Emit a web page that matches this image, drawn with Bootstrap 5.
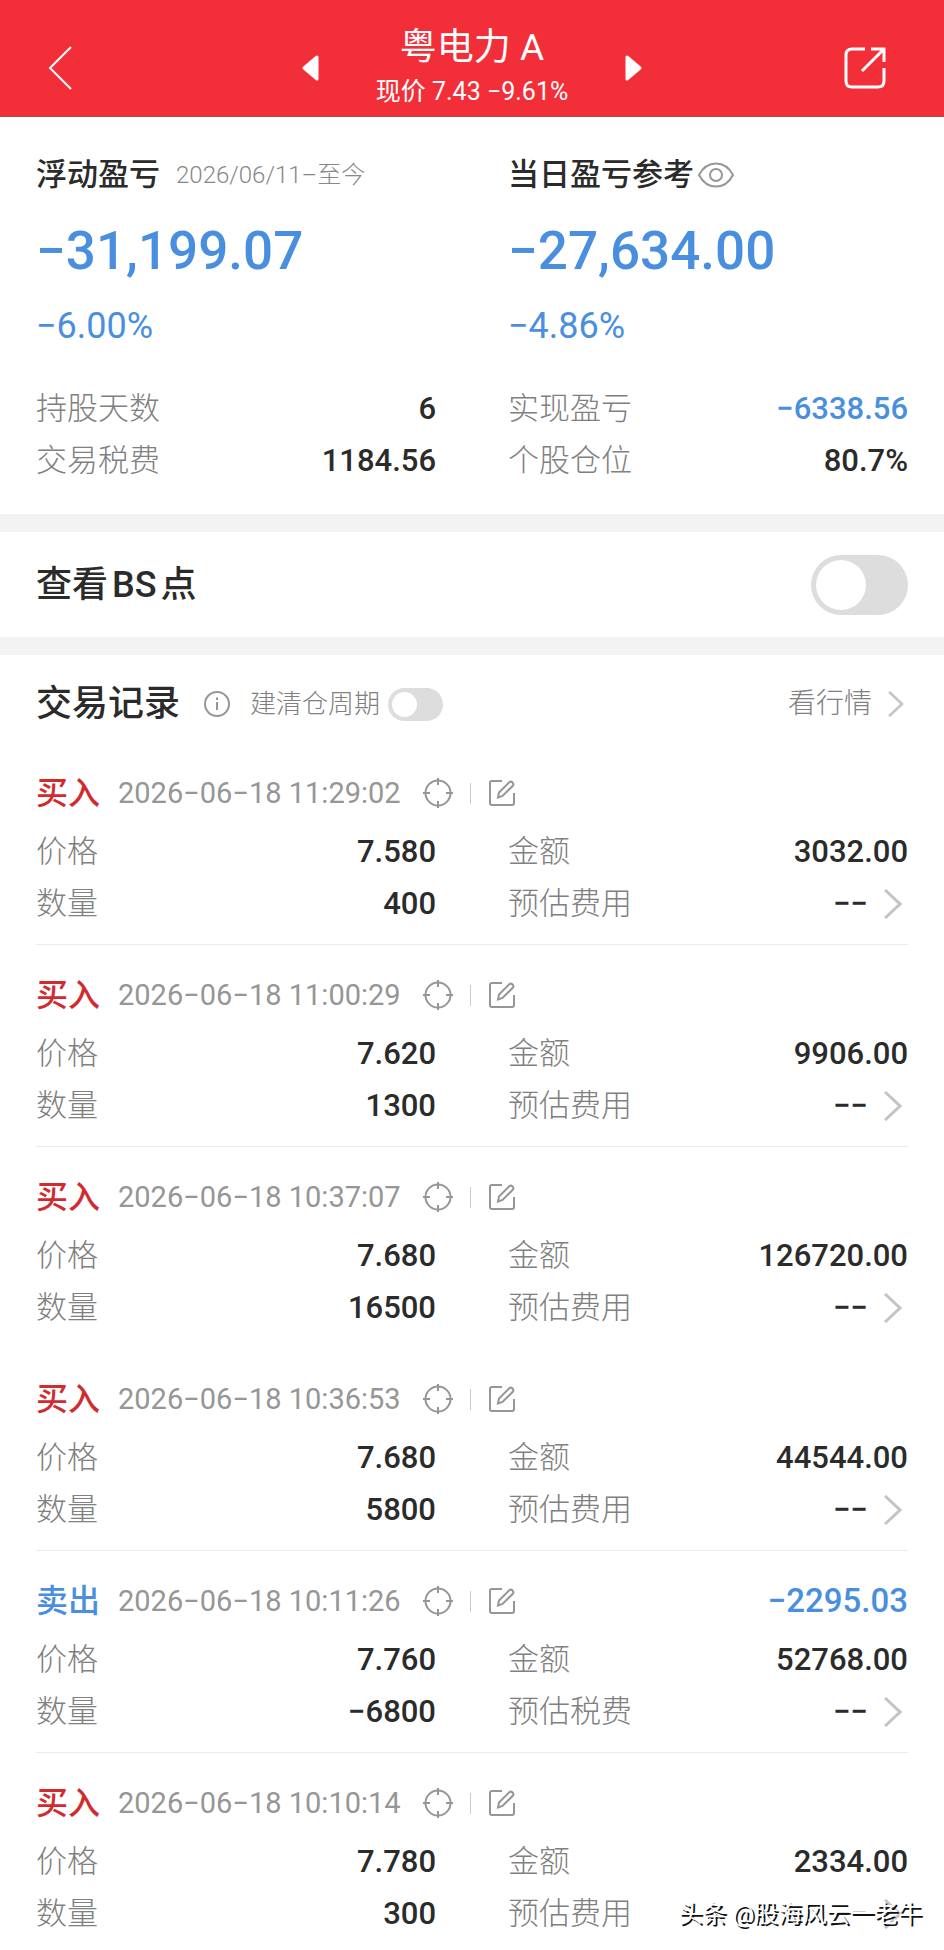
<!DOCTYPE html>
<html lang="zh-CN">
<head>
<meta charset="utf-8">
<meta name="viewport" content="width=device-width, initial-scale=1">
<title>粤电力 A</title>
<link href="https://cdn.jsdelivr.net/npm/bootstrap@5.3.0/dist/css/bootstrap.min.css" rel="stylesheet">
<style>
:root{--ink:#2b2b2b;--muted:#969696;--blue:#4a8fdf;--red:#d22b2f;--line:#ebebeb;--band:#f3f3f3}
body{font-family:Roboto,"Noto Sans CJK SC",sans-serif;font-size:31px;line-height:52px;color:var(--ink);background:#fff}
svg{display:block;flex:none;fill:none;stroke:currentColor}
button{background:none;border:0;padding:0;color:inherit;line-height:1}
a{color:inherit;text-decoration:none}
.topbar{display:grid;grid-template-columns:1fr auto 1fr;align-items:center;background:#f22f38;color:#fff;height:117px;padding:20px 36px 0;border-bottom:1px solid #b7474f}
.topbar h1{font-size:37px;line-height:48px;font-weight:400}
.quote{font-size:25px;line-height:40px}
.switcher{gap:56px}
.two{display:grid;grid-template-columns:1fr 1fr;column-gap:72px}
.edge{padding-left:36px;padding-right:36px}
.summary{padding-top:28px;padding-bottom:27px;border-bottom:18px solid var(--band)}
.heading{font-size:31px;line-height:60px;font-weight:500}
.period{font-size:24px;font-weight:300;color:#888;margin-left:16px}
.amount{font-size:53px;line-height:92px;font-weight:500}
.rate{font-size:36px;line-height:58px}
.blue{color:var(--blue)}
.muted{color:var(--muted)}
.val{font-weight:500}
.lbl{font-weight:300;color:#808080}
.stats{margin-top:28px}
.bs{height:123px;border-bottom:18px solid var(--band);font-size:36px;font-weight:500}
.switch{appearance:none;flex:none;margin:0;border-radius:30px;width:97px;height:60px;background:#ddd;padding:5px;cursor:pointer}
.switch::before{content:"";display:block;height:50px;width:50px;border-radius:50%;background:#fff}
.switch.mini{width:55px;height:33px;padding:4px}
.switch.mini::before{width:25px;height:25px}
.loghead{height:88px;padding-top:10px}
.loghead h2{font-size:36px;font-weight:500;line-height:52px}
.cycle{font-size:26px;font-weight:300;color:#808080;margin-left:20px}
.more{font-size:28px;font-weight:300;color:#808080}
.trade{padding:21px 0 14px;border-bottom:1px solid var(--line)}
.trade.plain{border-color:transparent}
.trade:last-child{padding-bottom:0;border:0}
.tradehead{height:58px;margin-bottom:4px}
.side{font-size:32px;font-weight:500;color:var(--red);margin-right:18px}
.side.sell{color:var(--blue)}
.stamp{font-size:29px;color:var(--muted);margin-right:22px}
.bar{width:1px;height:21px;background:#ccc;margin:0 17px}
.gain{font-size:33px;font-weight:500}
.chev{color:#c4c4c4}
.watermark{position:absolute;right:22px;bottom:8px;font-size:24px;line-height:36px;color:#fff;text-shadow:2px 2px 0 #111;white-space:nowrap}
</style>
</head>
<body>
<svg class="d-none" xmlns="http://www.w3.org/2000/svg">
<symbol id="aim" viewBox="0 0 30 30"><circle cx="15" cy="15" r="12.5"/><path d="M15 0v7M15 23v7M0 15h7M23 15h7"/></symbol>
<symbol id="edit" viewBox="0 0 28 28"><path d="M14 2H4Q2 2 2 4v20q0 2 2 2h20q2 0 2-2V14"/><path d="M10 18.500l1-5L21.500 3q1.500-1 3 .500t.500 3L14.500 17z"/></symbol>
<symbol id="next" viewBox="0 0 18 30"><path d="M1 1l15 14L1 29"/></symbol>
</svg>
<header class="topbar">
<button type="button" class="justify-self-start d-flex" aria-label="返回"><svg width="48" height="46" viewBox="0 0 48 46" stroke-width="2"><path d="M35 2L14 23l21 21"/></svg></button>
<div class="switcher d-flex align-items-center">
<button type="button" aria-label="上一只"><svg width="18" height="26" viewBox="0 0 18 26"><path d="M15 2v22L2 13z" fill="currentColor" stroke-width="3" stroke-linejoin="round"/></svg></button>
<div class="text-center"><h1 class="m-0">粤电力 A</h1><div class="quote">现价 7.43 −9.61%</div></div>
<button type="button" aria-label="下一只"><svg width="18" height="26" viewBox="0 0 18 26"><path d="M3 2v22l13-11z" fill="currentColor" stroke-width="3" stroke-linejoin="round"/></svg></button>
</div>
<button type="button" class="ms-auto" aria-label="分享"><svg width="64" height="42" viewBox="0 0 64 42" stroke-width="3"><path d="M21 2H8Q2 2 2 8v26q0 6 6 6h26q6 0 6-6V21M27 2h13v13M18 24L40 2"/></svg></button>
</header>
<main class="position-relative">
<section class="summary edge">
<div class="two">
<div>
<div class="d-flex align-items-center heading"><span>浮动盈亏</span><span class="period">2026/06/11–至今</span></div>
<div class="amount blue">−31,199.07</div>
<div class="rate blue">−6.00%</div>
</div>
<div>
<div class="d-flex align-items-center heading"><span>当日盈亏参考</span><button type="button" class="muted ms-1" aria-label="显示或隐藏"><svg width="36" height="26" viewBox="0 0 36 26" stroke-width="2"><path d="M1 13Q7 1.500 18 1.500T35 13Q29 24.500 18 24.500T1 13z"/><circle cx="18" cy="13" r="6"/></svg></button></div>
<div class="amount blue">−27,634.00</div>
<div class="rate blue">−4.86%</div>
</div>
</div>
<div class="two stats">
<div class="d-flex justify-content-between"><span class="lbl">持股天数</span><span class="val">6</span></div>
<div class="d-flex justify-content-between"><span class="lbl">实现盈亏</span><span class="val blue">−6338.56</span></div>
<div class="d-flex justify-content-between"><span class="lbl">交易税费</span><span class="val">1184.56</span></div>
<div class="d-flex justify-content-between"><span class="lbl">个股仓位</span><span class="val">80.7%</span></div>
</div>
</section>
<section class="bs edge d-flex align-items-center justify-content-between">
<label for="bs">查看<span class="mx-1">BS</span>点</label><input class="switch" type="checkbox" role="switch" id="bs">
</section>
<section class="edge">
<div class="loghead d-flex align-items-center">
<h2 class="m-0">交易记录</h2>
<button type="button" class="muted ms-4" aria-label="说明"><svg width="26" height="26" viewBox="0 0 26 26" stroke-width="2"><circle cx="13" cy="13" r="12"/><path d="M13 11v8M13 6.500v2.500"/></svg></button>
<label class="cycle" for="cycle">建清仓周期</label><input class="switch mini ms-2" type="checkbox" role="switch" id="cycle">
<a href="#" class="more ms-auto me-1 d-flex align-items-center">看行情<svg class="chev ms-3" width="16" height="26" viewBox="0 0 18 30" stroke-width="3"><use href="#next"/></svg></a>
</div>
<div id="trades"></div>
</section>
<div class="watermark">头条 @股海风云一老牛</div>
</main>
<script src="https://cdn.jsdelivr.net/npm/bootstrap@5.3.0/dist/js/bootstrap.bundle.min.js"></script>
<script>
const trades=[
["买入","11:29:02","7.580","3032.00","400"],
["买入","11:00:29","7.620","9906.00","1300"],
["买入","10:37:07","7.680","126720.00","16500"],
["买入","10:36:53","7.680","44544.00","5800"],
["卖出","10:11:26","7.760","52768.00","−6800","−2295.03"],
["买入","10:10:14","7.780","2334.00","300"]];
const cell=(label,value)=>`<div class="d-flex justify-content-between align-items-center"><span class="lbl">${label}</span>${value}</div>`;
const num=v=>`<span class="val">${v}</span>`;
document.getElementById("trades").innerHTML=trades.map(([side,time,price,sum,qty,gain],i)=>`
<article class="trade${i===2?" plain":""}">
<div class="tradehead d-flex align-items-center"><span class="side${gain?" sell":""}">${side}</span><span class="stamp">2026−06−18 ${time}</span>
<button type="button" class="muted" aria-label="定位"><svg width="30" height="30" stroke-width="2"><use href="#aim"/></svg></button><span class="bar"></span>
<button type="button" class="muted" aria-label="编辑"><svg width="28" height="28" stroke-width="2"><use href="#edit"/></svg></button>
${gain?`<span class="gain blue ms-auto">${gain}</span>`:""}</div>
<div class="two">${cell("价格",num(price))}${cell("金额",num(sum))}${cell("数量",num(qty))}
${cell(gain?"预估税费":"预估费用",`<a href="#" class="d-flex align-items-center me-1" aria-label="费用明细">${num("−−")}<svg class="chev ms-3" width="20" height="30" viewBox="0 0 20 30" stroke-width="3"><use href="#next" width="18" height="30"/></svg></a>`)}</div>
</article>`).join("");
</script>
</body>
</html>
